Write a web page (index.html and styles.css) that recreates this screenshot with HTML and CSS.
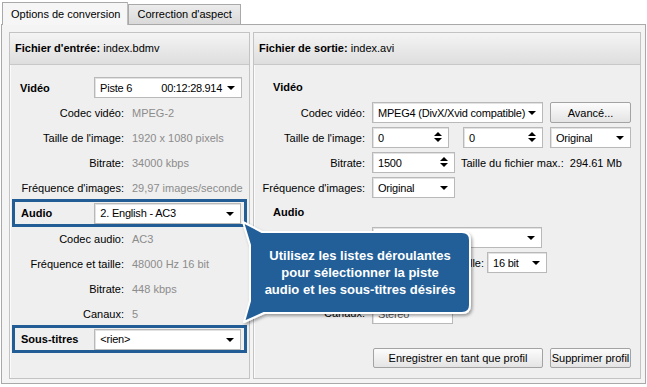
FILE: index.html
```html
<!DOCTYPE html>
<html lang="fr">
<head>
    <meta charset="UTF-8">
    <title>Options de conversion</title>
    <link rel="stylesheet" href="styles.css">
</head>
<body>
    <!-- Tabs -->
    <div class="tabs">
        <div class="tab active">Options de conversion</div>
        <div class="tab">Correction d'aspect</div>
    </div>

    <div class="content">
        <!-- Input file -->
        <div class="panel panel-in">
            <div class="panel-head"><b>Fichier d'entrée:</b> index.bdmv</div>
            <div class="panel-body">
                <div class="track">
                    <span class="track-label">Vidéo</span>
                    <div class="select track-select"><span>Piste 6</span><span class="sel-extra">00:12:28.914</span><i class="arrow"></i></div>
                </div>
                <div class="info"><span class="lbl">Codec vidéo:</span><span class="val">MPEG-2</span></div>
                <div class="info"><span class="lbl">Taille de l'image:</span><span class="val">1920 x 1080 pixels</span></div>
                <div class="info"><span class="lbl">Bitrate:</span><span class="val">34000 kbps</span></div>
                <div class="info"><span class="lbl">Fréquence d'images:</span><span class="val">29,97 images/seconde</span></div>
                <div class="track hl">
                    <span class="track-label">Audio</span>
                    <div class="select track-select"><span>2. English - AC3</span><i class="arrow"></i></div>
                </div>
                <div class="info"><span class="lbl">Codec audio:</span><span class="val">AC3</span></div>
                <div class="info"><span class="lbl">Fréquence et taille:</span><span class="val">48000 Hz 16 bit</span></div>
                <div class="info"><span class="lbl">Bitrate:</span><span class="val">448 kbps</span></div>
                <div class="info"><span class="lbl">Canaux:</span><span class="val">5</span></div>
                <div class="track hl">
                    <span class="track-label">Sous-titres</span>
                    <div class="select track-select"><span>&lt;rien&gt;</span><i class="arrow"></i></div>
                </div>
            </div>
        </div>

        <!-- Output file -->
        <div class="panel panel-out">
            <div class="panel-head"><b>Fichier de sortie:</b> index.avi</div>
            <div class="panel-body">
                <div class="section">Vidéo</div>
                <div class="field">
                    <span class="lbl">Codec vidéo:</span>
                    <div class="select w171"><span>MPEG4 (DivX/Xvid compatible)</span><i class="arrow"></i></div>
                    <button class="btn w81">Avancé...</button>
                </div>
                <div class="field">
                    <span class="lbl">Taille de l'image:</span>
                    <div class="spin w77"><span>0</span><i class="updown"></i></div>
                    <div class="spin w80 ml14"><span>0</span><i class="updown"></i></div>
                    <div class="select w81"><span>Original</span><i class="arrow"></i></div>
                </div>
                <div class="field">
                    <span class="lbl">Bitrate:</span>
                    <div class="spin w83"><span>1500</span><i class="updown"></i></div>
                    <span class="note">Taille du fichier max.:&nbsp; 294.61 Mb</span>
                </div>
                <div class="field">
                    <span class="lbl">Fréquence d'images:</span>
                    <div class="select w83"><span>Original</span><i class="arrow"></i></div>
                </div>
                <div class="section">Audio</div>
                <!-- rows below are mostly hidden by the callout -->
                <div class="field">
                    <span class="lbl"></span>
                    <div class="select w170"><i class="arrow"></i></div>
                </div>
                <div class="field">
                    <span class="lbl"></span>
                    <div class="select w70"><i class="arrow"></i></div>
                    <span class="sublbl">Taille:</span>
                    <div class="select w60"><span>16 bit</span><i class="arrow"></i></div>
                </div>
                <div class="field">
                    <span class="lbl"></span>
                    <div class="select w83"><i class="arrow"></i></div>
                </div>
                <div class="field">
                    <span class="lbl">Canaux:</span>
                    <div class="select w81 low"><span>Stéréo</span></div>
                </div>
                <div class="actions">
                    <button class="btn w170">Enregistrer en tant que profil</button>
                    <button class="btn w81">Supprimer profil</button>
                </div>
            </div>
        </div>
    </div>

    <!-- Callout over the panels -->
    <div class="callout">
        <svg class="callout-bg" width="240" height="125" viewBox="0 0 240 125">
            <defs>
                <filter id="shadow" x="-10%" y="-10%" width="125%" height="130%">
                    <feDropShadow dx="1.5" dy="2" stdDeviation="1.5" flood-color="#000" flood-opacity="0.35"/>
                </filter>
            </defs>
            <path d="M22 17 H222 Q230 17 230 25 V90 Q230 98 222 98 H24 L4 107 L10 86 V30 L3 7 Z"
                  fill="#235f98" stroke="#ffffff" stroke-width="2" stroke-linejoin="round" filter="url(#shadow)"/>
        </svg>
        <div class="callout-text">Utilisez les listes déroulantes<br>pour sélectionner la piste<br>audio et les sous-titres désirés</div>
    </div>
</body>
</html>
```

FILE: styles.css
```css
body {
    margin: 0;
    background-color: #ffffff;
    font-family: "Liberation Sans", Arial, sans-serif;
    font-size: 11px;
    color: #000000;
    width: 647px;
    height: 387px;
    overflow: hidden;
    position: relative;
}

b {
    font-weight: bold;
}

/* Tabs */
.tabs {
    display: flex;
    align-items: flex-end;
    height: 24px;
    padding-left: 2px;
}

.tab {
    height: 19px;
    line-height: 19px;
    padding: 0 8px;
    border: 1px solid #a9a9a9;
    border-bottom: none;
    background: linear-gradient(#ececec, #d9d9d9);
}

.tab.active {
    height: 22px;
    line-height: 22px;
    background: #f6f6f6;
    position: relative;
    z-index: 1;
    margin-bottom: -1px;
    padding: 0 7px 0 8px;
    border-right-color: #bdbdbd;
}

/* Tab content */
.content {
    display: flex;
    gap: 3px;
    margin: 0 1px;
    height: 360px;
    box-sizing: border-box;
    padding: 7px 6px 4px 7px;
    border: 1px solid #a9a9a9;
    background-color: #f4f4f4;
}

.panel {
    display: flex;
    flex-direction: column;
    box-sizing: border-box;
    border: 1px solid #c3c3c3;
    background-color: #efefef;
    box-shadow: inset 1px 1px 0 #fbfbfb;
}

.panel-in {
    width: 241px;
}

.panel-out {
    flex: 1;
}

.panel-head {
    height: 31px;
    line-height: 31px;
    padding-left: 5px;
    border-bottom: 1px solid #c8c8c8;
    background: linear-gradient(#f4f4f4, #dedede);
}

.panel-body {
    flex: 1;
    display: flex;
    flex-direction: column;
    padding: 10px 2px 10px 1px;
}

/* Input panel rows */
.track {
    display: flex;
    align-items: center;
    height: 25px;
    padding-left: 9px;
}

.track-label {
    width: 74px;
    font-weight: bold;
}

.track-select {
    width: 148px;
}

.track.hl {
    height: 22px;
    padding: 0 3px 0 6px;
    border: 3px solid #225d96;
    margin: -1px 0 -1px 1px;
}

.info + .track.hl {
    margin-top: -1px;
}

.info {
    display: flex;
    align-items: center;
    height: 25px;
}

.info .lbl {
    width: 113px;
    text-align: right;
}

.info .val {
    margin-left: 8px;
    color: #8c8c8c;
}

/* Output panel rows */
.section {
    height: 25px;
    line-height: 25px;
    padding-left: 18px;
    font-weight: bold;
}

.field {
    display: flex;
    align-items: center;
    height: 25px;
}

.field .lbl {
    width: 110px;
    text-align: right;
    margin-right: 7px;
}

.field .select,
.field .spin,
.field .btn {
    margin-right: 7px;
}

.note {
    margin-left: -1px;
}

.sublbl {
    width: 35px;
    text-align: right;
    margin-right: 3px;
}

.ml14 {
    margin-left: 7px;
}

.actions {
    margin-top: auto;
    display: flex;
    gap: 7px;
    padding-left: 118px;
}

/* Controls */
.select,
.spin {
    position: relative;
    display: flex;
    align-items: center;
    box-sizing: border-box;
    height: 21px;
    padding: 0 18px 0 5px;
    background-color: #ffffff;
    border: 1px solid #b9b9b9;
    box-shadow: inset 1px 1px 0 #e2e2e2;
    white-space: nowrap;
    overflow: hidden;
    letter-spacing: -0.2px;
}

.select.low {
    align-self: flex-end;
    margin-bottom: 1px;
    color: #555555;
}

.sel-extra {
    margin-left: auto;
    margin-right: 1px;
    letter-spacing: -0.3px;
}

.arrow {
    position: absolute;
    right: 6px;
    top: 8px;
    width: 0;
    height: 0;
    border-left: 4px solid transparent;
    border-right: 4px solid transparent;
    border-top: 4px solid #000000;
}

.updown {
    position: absolute;
    right: 6px;
    top: 4px;
    width: 0;
    height: 0;
    border-left: 4px solid transparent;
    border-right: 4px solid transparent;
    border-bottom: 4px solid #000000;
}

.updown::after {
    content: '';
    position: absolute;
    left: -4px;
    top: 6px;
    border-left: 4px solid transparent;
    border-right: 4px solid transparent;
    border-top: 4px solid #000000;
}

.btn {
    box-sizing: border-box;
    height: 21px;
    padding: 0;
    font-family: inherit;
    font-size: 11px;
    color: #000000;
    border: 1px solid #a3a3a3;
    border-radius: 2px;
    background: linear-gradient(#fcfcfc, #e4e4e4);
}

.actions .btn {
    height: 20px;
    margin: 0;
}

.w60 { width: 60px; }
.w70 { width: 70px; }
.w77 { width: 77px; }
.w80 { width: 80px; }
.w81 { width: 81px; }
.w83 { width: 83px; }
.w170 { width: 170px; }
.w171 { width: 171px; }

/* Callout */
.callout {
    position: absolute;
    left: 240px;
    top: 215px;
    width: 240px;
    height: 125px;
}

.callout-bg {
    position: absolute;
    left: 0;
    top: 0;
}

.callout-text {
    position: absolute;
    left: 10px;
    top: 32px;
    width: 220px;
    text-align: center;
    color: #ffffff;
    font-weight: bold;
    font-size: 13px;
    line-height: 17px;
}
```
